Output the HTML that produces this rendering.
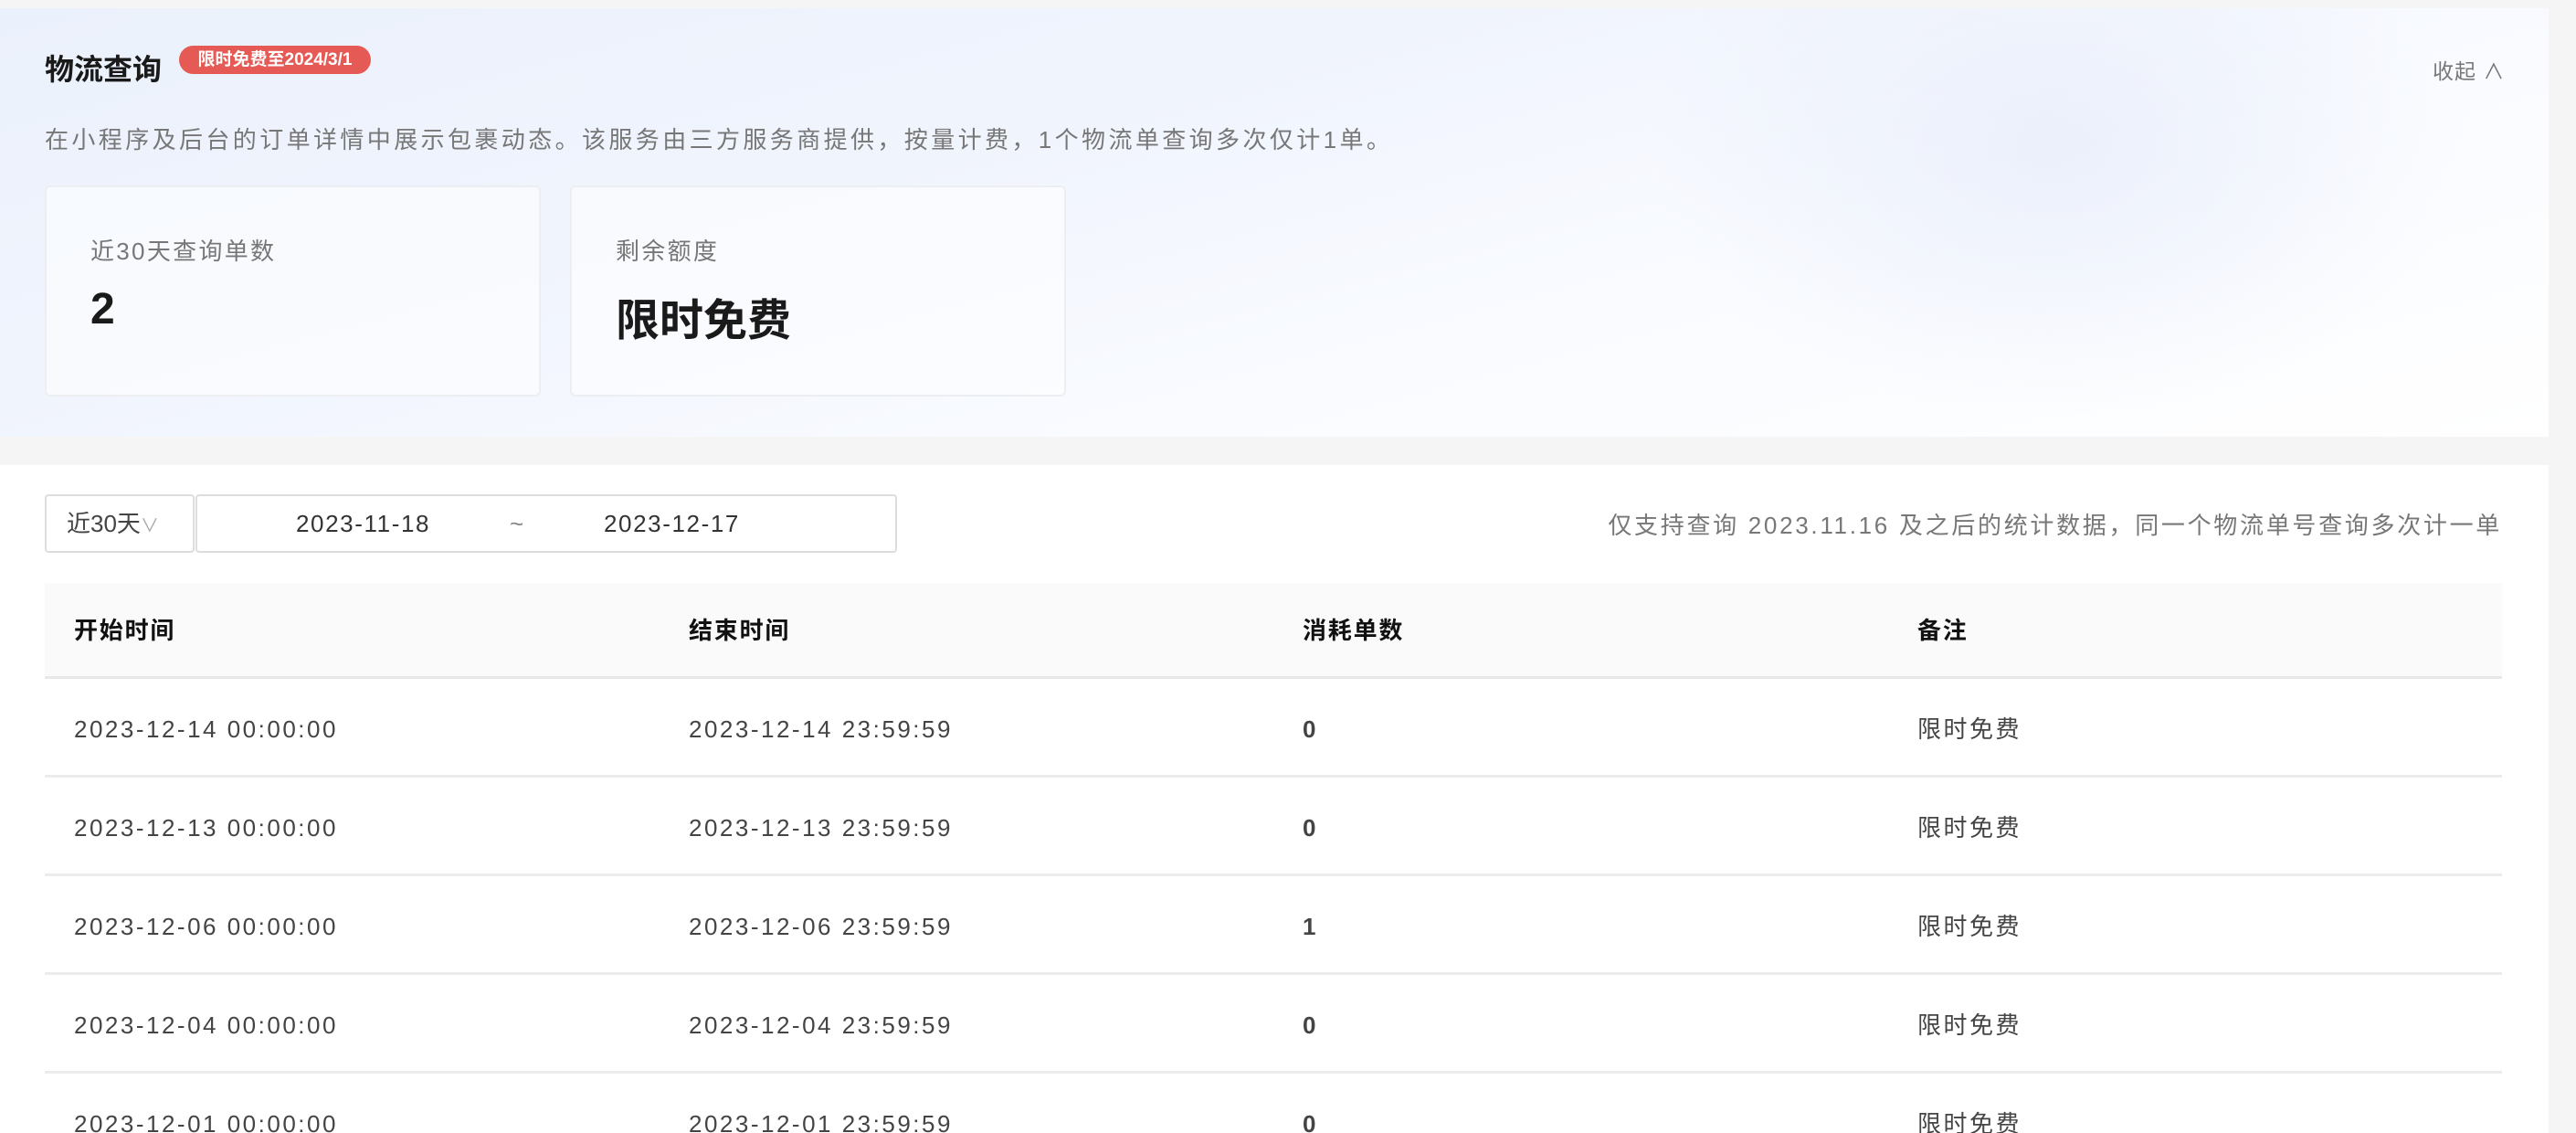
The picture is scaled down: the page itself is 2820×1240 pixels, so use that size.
<!DOCTYPE html>
<html><head><meta charset="utf-8">
<style>
*{margin:0;padding:0;box-sizing:border-box}
html,body{width:2820px;height:1240px;overflow:hidden}
body{background:#f5f5f5;font-family:"Liberation Sans","Noto Sans CJK SC",sans-serif;position:relative}
.card{position:absolute;left:0;top:9px;width:2790px;height:469px;background:linear-gradient(165deg,#ebf1fc 0%,#f0f4fd 35%,#f9fbff 65%,#fff 100%);overflow:hidden}
.card:before{content:"";position:absolute;left:1800px;top:-150px;width:900px;height:600px;background:radial-gradient(ellipse at center,rgba(232,237,250,.8),rgba(255,255,255,0) 70%)}
.title{position:absolute;left:49px;top:42px;font-size:32px;font-weight:bold;color:#1a1a1a}
.badge{position:absolute;left:196px;top:41px;height:31px;width:210px;border-radius:16px;background:#e55a55;color:#fff;font-size:19px;font-weight:bold;line-height:31px;text-align:center}
.collapse{position:absolute;left:2663px;top:50px;font-size:23px;color:#777;letter-spacing:1px}
.desc{position:absolute;left:49px;top:124px;font-size:26px;color:#777;letter-spacing:3.4px}
.stat{position:absolute;top:194px;width:543px;height:231px;border:2px solid #eceef2;border-radius:6px;background:rgba(255,255,255,.55)}
.stat .l{position:absolute;left:48px;top:50px;font-size:26px;color:#777;letter-spacing:2.3px}
.stat .v{position:absolute;left:48px;top:106px;font-size:48px;font-weight:bold;color:#1a1a1a}
.main{position:absolute;left:0;top:509px;width:2790px;height:760px;background:#fff}
.sel{position:absolute;left:49px;top:32px;width:164px;height:64px;border:2px solid #ddd;border-radius:4px;font-size:26px;color:#444;line-height:60px;padding-left:22px}
.sel span{color:#aaa;font-size:20px}
.range{position:absolute;left:214px;top:32px;width:768px;height:64px;border:2px solid #ddd;border-radius:4px;font-size:26px;color:#333;line-height:60px;letter-spacing:1.6px}
.note{position:absolute;right:51px;top:46px;font-size:26px;color:#777;letter-spacing:2.7px}
.th{position:absolute;left:49px;top:129px;width:2690px;height:105px;background:#fafafa;border-bottom:3px solid #e8e8e8}
.row{position:absolute;left:49px;width:2690px;height:108px;border-bottom:3px solid #ececec}
.c{position:absolute;top:0;line-height:110px;font-size:26px;color:#444;letter-spacing:2.5px}
.th .c{font-weight:bold;color:#111;letter-spacing:1.8px;line-height:105px}
</style></head><body>
<div class="card">
<div class="title">物流查询</div>
<div class="badge">限时免费至2024/3/1</div>
<div class="collapse">收起 ∧</div>
<div class="desc">在小程序及后台的订单详情中展示包裹动态。该服务由三方服务商提供，按量计费，1个物流单查询多次仅计1单。</div>
<div class="stat" style="left:49px"><div class="l">近30天查询单数</div><div class="v">2</div></div>
<div class="stat" style="left:624px"><div class="l">剩余额度</div><div class="v">限时免费</div></div>
</div>
<div class="main">
<div class="sel">近30天<span>∨</span></div>
<div class="range"><span style="position:absolute;left:108px">2023-11-18</span><span style="position:absolute;left:342px;color:#888">~</span><span style="position:absolute;left:445px">2023-12-17</span></div>
<div class="note">仅支持查询 2023.11.16 及之后的统计数据，同一个物流单号查询多次计一单</div>
<div class="th"><div class="c" style="left:32px">开始时间</div><div class="c" style="left:705px">结束时间</div><div class="c" style="left:1377px">消耗单数</div><div class="c" style="left:2050px">备注</div></div>
<div class="row" style="top:234px"><div class="c" style="left:32px">2023-12-14 00:00:00</div><div class="c" style="left:705px">2023-12-14 23:59:59</div><div class="c" style="left:1377px;font-weight:bold">0</div><div class="c" style="left:2050px">限时免费</div></div>
<div class="row" style="top:342px"><div class="c" style="left:32px">2023-12-13 00:00:00</div><div class="c" style="left:705px">2023-12-13 23:59:59</div><div class="c" style="left:1377px;font-weight:bold">0</div><div class="c" style="left:2050px">限时免费</div></div>
<div class="row" style="top:450px"><div class="c" style="left:32px">2023-12-06 00:00:00</div><div class="c" style="left:705px">2023-12-06 23:59:59</div><div class="c" style="left:1377px;font-weight:bold">1</div><div class="c" style="left:2050px">限时免费</div></div>
<div class="row" style="top:558px"><div class="c" style="left:32px">2023-12-04 00:00:00</div><div class="c" style="left:705px">2023-12-04 23:59:59</div><div class="c" style="left:1377px;font-weight:bold">0</div><div class="c" style="left:2050px">限时免费</div></div>
<div class="row" style="top:666px"><div class="c" style="left:32px">2023-12-01 00:00:00</div><div class="c" style="left:705px">2023-12-01 23:59:59</div><div class="c" style="left:1377px;font-weight:bold">0</div><div class="c" style="left:2050px">限时免费</div></div>
</div>
</body></html>
